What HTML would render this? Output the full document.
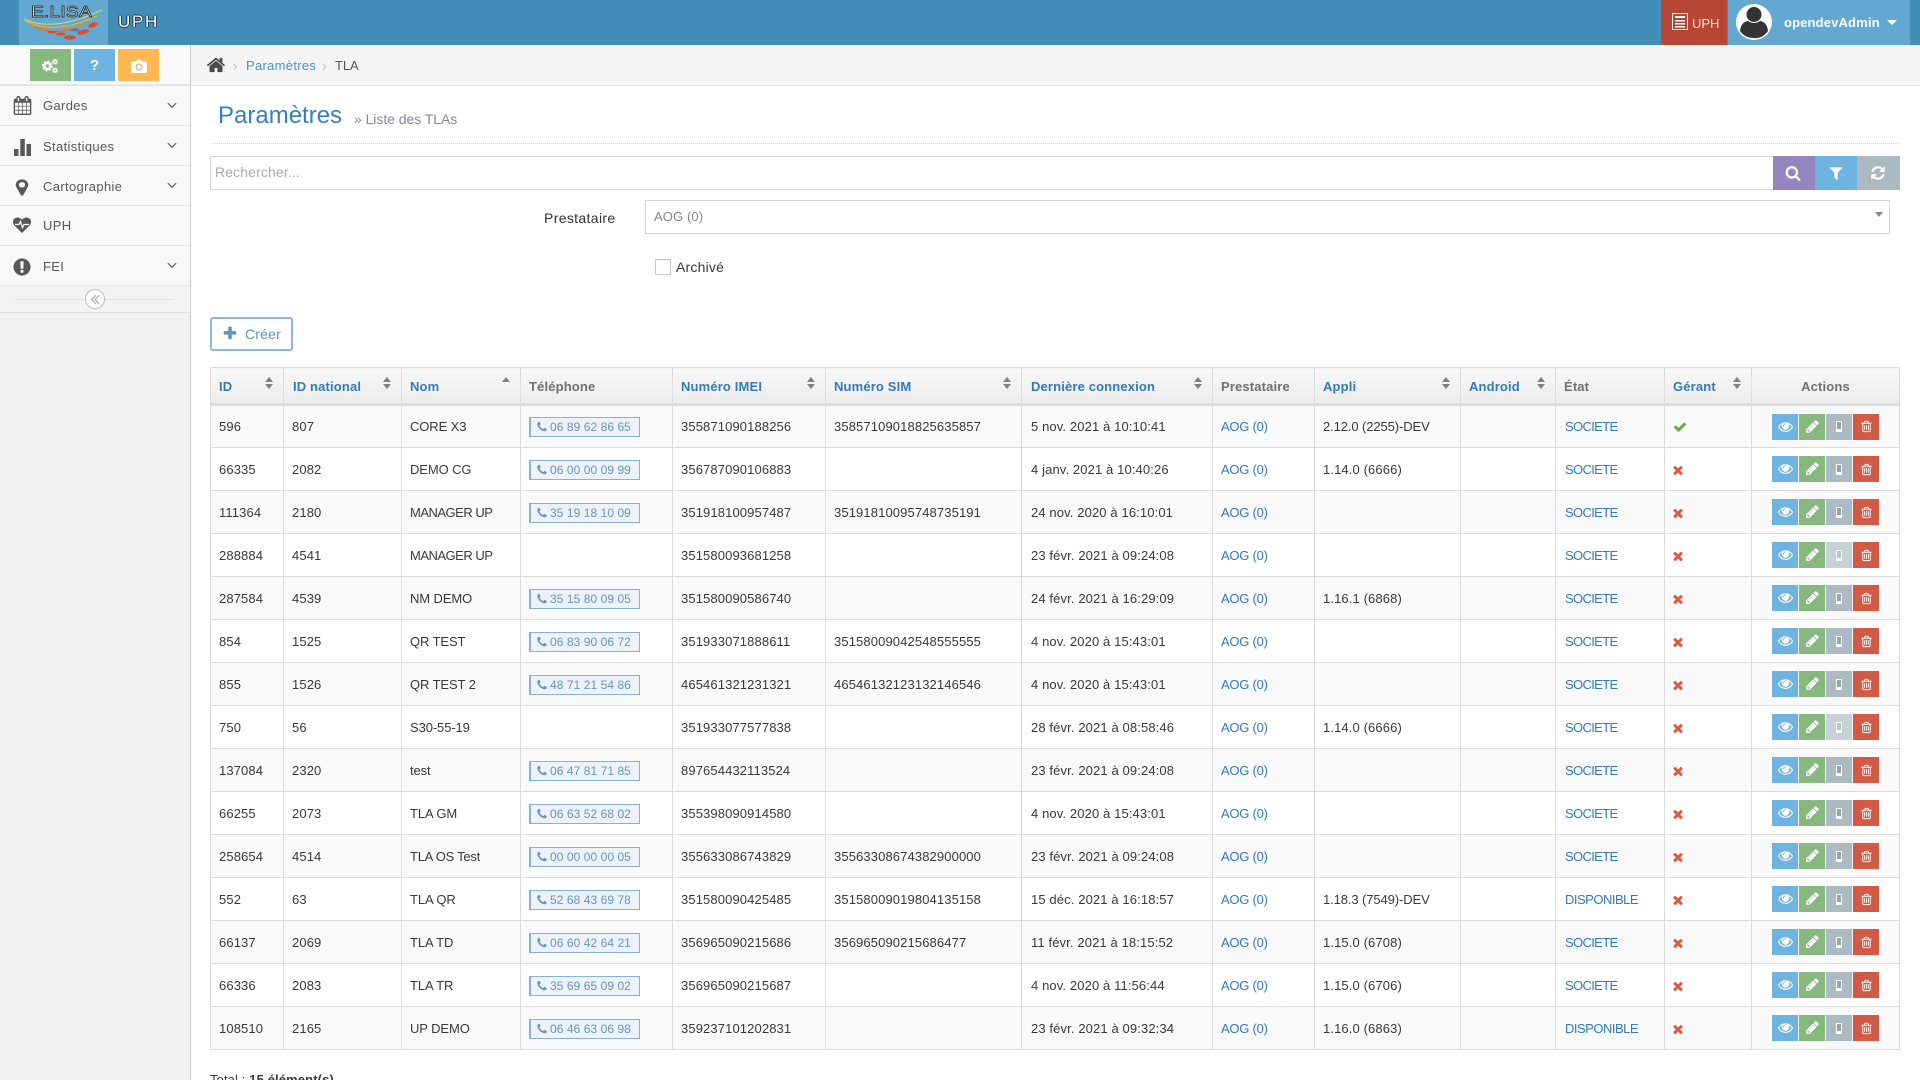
<!DOCTYPE html>
<html lang="fr"><head><meta charset="utf-8"><title>Paramètres - TLA</title>
<style>
*{box-sizing:border-box}
html,body{margin:0;padding:0;width:1920px;height:1080px;overflow:hidden;background:#fff;font:13px/1.2 "Liberation Sans",sans-serif;color:#393939;letter-spacing:.12px}
body{position:relative}
.a{position:absolute}
svg{display:block;fill:currentColor}
a{color:#337ab7;text-decoration:none}
.mi{position:absolute;left:0;width:190px;height:40px;background:#f8f8f8;border-bottom:1px solid #e5e5e5;color:#585858}
.mi span{position:absolute;left:43px;top:0;line-height:41px;font-size:13px;letter-spacing:.35px}
.mi svg{position:absolute}
.mi .ch{left:164px;top:11px;width:16px;height:16px;color:#666}
table{position:absolute;left:210px;top:367px;width:1689px;border-collapse:collapse;table-layout:fixed}
th,td{border:1px solid #ddd;padding:0 0 0 8px;text-align:left;white-space:nowrap;position:relative}
th{height:37px;font-weight:bold;color:#707070;background:linear-gradient(#f8f8f8,#ececec);border-bottom:3px solid #ddd;padding-top:2px;letter-spacing:.15px}
th.s{color:#337ab7}
th.s:before,th.s:after{content:"";position:absolute;right:10px;width:0;height:0;border-left:4px solid transparent;border-right:4px solid transparent}
th.s:before{top:9px;border-bottom:5px solid #808080}
th.s:after{top:16px;border-top:5px solid #808080}
th.u:after{display:none}
th:nth-child(2),th:nth-child(7),td:nth-child(7){padding-left:9px}
td{height:43px;padding-top:1px}
tr:nth-child(odd) td{background:#f9f9f9}
td:nth-child(3){letter-spacing:-.1px}
td:nth-child(8) a{letter-spacing:-.25px}
td:nth-child(11){padding-left:9px}
td:nth-child(11) a{letter-spacing:-.65px}
.t{display:block;width:111px;height:20px;border:1px solid #8cb0d0;border-left-width:2px;background:#ebf2f8;color:#6b95ba;font-size:12px;line-height:18px;padding-left:19px;position:relative;letter-spacing:.06px}
.t svg{position:absolute;left:5px;top:3px;width:12px;height:12px}
.k{color:#69aa46;width:14px;height:14px}
.x{color:#dd5a43;width:14px;height:14px;margin-left:-2px}
td.ac{padding:0 0 0 20px}
.bt{display:flex;gap:1px}
.bt i{display:flex;align-items:center;justify-content:center;width:26px;height:26px;color:#fff}
.bt i svg{width:15px;height:15px;margin-top:-1px}
.e{background:#6fb3e0}.p{background:#87b87f}.m{background:#abbac3}.d{background:#d15b47}.o{opacity:.65}
.bt .d svg{width:13px;height:13px;margin-top:0}
.mo{display:block;width:6px;height:11px;background:#9aa3a8;border:solid #fff;border-width:1px 1px 3px}
</style></head><body>
<svg width="0" height="0" style="position:absolute"><defs>
<symbol id="i-eye" viewBox="0 0 1792 1792"><path d="M1664 960q-152-236-381-353 61 104 61 225 0 185-131.500 316.500t-316.500 131.500-316.500-131.500-131.500-316.500q0-121 61-225-229 117-381 353 133 205 333.500 326.500t434.500 121.500 434.500-121.500 333.500-326.500zm-720-384q0-20-14-34t-34-14q-125 0-214.500 89.500t-89.500 214.500q0 20 14 34t34 14 34-14 14-34q0-86 61-147t147-61q20 0 34-14t14-34zm848 384q0 34-20 69-140 230-376.500 368.500t-499.500 138.500-499.500-139-376.500-368q-20-35-20-69t20-69q140-229 376.500-368t499.500-139 499.500 139 376.500 368q20 35 20 69z"/></symbol>
<symbol id="i-pen" viewBox="0 0 1792 1792"><path d="M491 1536l91-91-235-235-91 91v107h128v128h107zm523-928q0-22-22-22-10 0-17 7l-542 542q-7 7-7 17 0 22 22 22 10 0 17-7l542-542q7-7 7-17zm-54-192l416 416-832 832h-416v-416zm683 96q0 53-37 90l-166 166-416-416 166-165q36-38 90-38 53 0 91 38l235 234q37 39 37 91z"/></symbol>
<symbol id="i-tr" viewBox="0 0 1792 1792"><path d="M704 736v576q0 14-9 23t-23 9h-64q-14 0-23-9t-9-23v-576q0-14 9-23t23-9h64q14 0 23 9t9 23zm256 0v576q0 14-9 23t-23 9h-64q-14 0-23-9t-9-23v-576q0-14 9-23t23-9h64q14 0 23 9t9 23zm256 0v576q0 14-9 23t-23 9h-64q-14 0-23-9t-9-23v-576q0-14 9-23t23-9h64q14 0 23 9t9 23zm128 724v-948h-896v948q0 22 7 40.500t14.500 27 10.500 8.500h832q3 0 10.500-8.500t14.500-27 7-40.500zm-672-1076h448l-48-117q-7-9-17-11h-317q-10 2-17 11zm928 32v64q0 14-9 23t-23 9h-96v948q0 83-47 143.500t-113 60.500h-832q-66 0-113-58.500t-47-141.500v-952h-96q-14 0-23-9t-9-23v-64q0-14 9-23t23-9h309l70-167q15-37 54-63t79-26h320q40 0 79 26t54 63l70 167h309q14 0 23 9t9 23z"/></symbol>
<symbol id="i-ph" viewBox="0 0 1792 1792"><path d="M1600 1240q0 27-10 70.500t-21 68.500q-21 50-122 106-94 51-186 51-27 0-53-3.500t-57.500-12.500-47-14.500-55.500-20.500-49-18q-98-35-175-83-127-79-264-216t-216-264q-48-77-83-175-3-9-18-49t-20.500-55.500-14.500-47-12.500-57.500-3.500-53q0-92 51-186 56-101 106-122 25-11 68.500-21t70.500-10q14 0 21 3 18 6 53 76 11 19 30 54t35 63.500 31 53.500q3 4 17.500 25t21.500 35.500 7 28.500q0 20-28.500 50t-62 55-62 53-28.500 46q0 9 5 22.500t8.500 20.500 14 24 11.500 19q76 137 174 235t235 174q2 1 19 11.500t24 14 20.500 8.500 22.500 5q18 0 46-28.500t53-62 55-62 50-28.500q14 0 28.500 7t35.500 21.500 25 17.500q25 15 53.500 31t63.500 35 54 30q70 35 76 53 3 7 3 21z"/></symbol>
<symbol id="i-k" viewBox="0 0 1792 1792"><path d="M1671 566q0 40-28 68l-724 724-136 136q-28 28-68 28t-68-28l-136-136-362-362q-28-28-28-68t28-68l136-136q28-28 68-28t68 28l294 295 656-657q28-28 68-28t68 28l136 136q28 28 28 68z"/></symbol>
<symbol id="i-x" viewBox="0 0 1792 1792"><path d="M1490 1322q0 40-28 68l-136 136q-28 28-68 28t-68-28l-294-294-294 294q-28 28-68 28t-68-28l-136-136q-28-28-28-68t28-68l294-294-294-294q-28-28-28-68t28-68l136-136q28-28 68-28t68 28l294 294 294-294q28-28 68-28t68 28l136 136q28 28 28 68t-28 68l-294 294 294 294q28 28 28 68z"/></symbol>
<symbol id="i-dn" viewBox="0 0 1792 1792"><path d="M1395 736q0 13-10 23l-466 466q-10 10-23 10t-23-10l-466-466q-10-10-10-23t10-23l50-50q10-10 23-10t23 10l393 393 393-393q10-10 23-10t23 10l50 50q10 10 10 23z"/></symbol>
<symbol id="i-r" viewBox="0 0 1792 1792"><path d="M1171 960q0 13-10 23l-466 466q-10 10-23 10t-23-10l-50-50q-10-10-10-23t10-23l393-393-393-393q-10-10-10-23t10-23l50-50q10-10 23-10t23 10l466 466q10 10 10 23z"/></symbol>
</defs></svg>

<!-- Navbar -->
<div class="a" style="left:0;top:0;width:1920px;height:45px;background:#438eb9"></div>
<div class="a" style="left:19px;top:0;width:89px;height:45px;background:#62a8d1"></div>
<svg class="a" style="left:19px;top:0" width="89" height="45" viewBox="0 0 89 45">
<g fill="none" stroke-linecap="round">
<path d="M5 19Q34 33 83 10" stroke="#d7d75a" stroke-width="1"/>
<path d="M7 21Q34 36 78 16" stroke="#dcb844" stroke-width="1.200"/>
<path d="M11 24Q36 37 72 21" stroke="#dd8a36" stroke-width="1.500"/>
<path d="M16 27Q38 36 60 27" stroke="#d9722e" stroke-width="1.200"/>
</g>
<g fill="#e2492a"><ellipse cx="51" cy="37.500" rx="6" ry="2.200"/><ellipse cx="64" cy="32" rx="6" ry="2.200" transform="rotate(-14 64 32)"/><ellipse cx="74" cy="25" rx="5" ry="2.100" transform="rotate(-22 74 25)"/><ellipse cx="42" cy="34" rx="5" ry="1.500"/><ellipse cx="33" cy="32" rx="5" ry="1.200"/></g>
<ellipse cx="56" cy="30" rx="4.500" ry="1.500" fill="#3b7fc9"/>
<text x="12" y="17" font-family="Liberation Sans" font-size="16" textLength="61" lengthAdjust="spacingAndGlyphs" fill="#d8e6ee" stroke="#1f1f1f" stroke-width=".7">E.LISA</text>
</svg>
<div class="a" style="left:118px;top:13px;font-size:17px;line-height:18px;letter-spacing:1.7px;color:#fff;text-shadow:1px 0 0 #1d3a4d,-1px 0 0 #1d3a4d,0 1px 0 #1d3a4d,0 -1px 0 #1d3a4d">UPH</div>

<div class="a" style="left:1661px;top:0;width:66px;height:45px;background:#b74635"></div>
<svg class="a" style="left:1672px;top:13px" width="16" height="17" viewBox="0 0 16 17"><rect x=".5" y=".5" width="15" height="16" fill="none" stroke="#fff"/><path d="M3 3h10v2H3zM3 7h10v1.500H3zM3 10h10v1.500H3zM3 13h10v1.500H3z" fill="#fff"/></svg>
<div class="a" style="left:1692px;top:15px;color:#f4e2df;font-size:13px;line-height:17px;letter-spacing:0">UPH</div>
<div class="a" style="left:1728px;top:0;width:182px;height:45px;background:#62a8d1"></div>
<svg class="a" style="left:1736px;top:4px" width="36" height="36" viewBox="0 0 36 36"><circle cx="18" cy="18" r="18" fill="#fff"/><circle cx="18" cy="10.500" r="7.500" fill="#333"/><path d="M4 27Q5 18 12 17Q18 21 24 17Q31 18 32 27Q26 35 18 34Q9 34 4 27Z" fill="#333"/></svg>
<div class="a" style="left:1784px;top:15px;color:#fff;font-weight:bold;font-size:13px;line-height:16px;letter-spacing:.15px">opendevAdmin</div>
<div class="a" style="left:1887px;top:20px;width:0;height:0;border:5px solid transparent;border-top:5px solid #fff;border-left-width:5px"></div>

<!-- Sidebar -->
<div class="a" style="left:0;top:45px;width:190px;height:1035px;background:#f2f2f2"></div>
<div class="a" style="left:190px;top:45px;width:1px;height:1035px;background:#ccc"></div>
<div class="a" style="left:0;top:45px;width:190px;height:41px;background:#fafafa;border-bottom:2px solid #e5e5e5"></div>
<div class="a" style="left:30px;top:49px;width:41px;height:32px;background:#87b87f"></div>
<div class="a" style="left:74px;top:49px;width:41px;height:32px;background:#6fb3e0;color:#fff;font-weight:bold;font-size:15px;line-height:33px;text-align:center">?</div>
<div class="a" style="left:118px;top:49px;width:41px;height:32px;background:#ffb752"></div>
<svg class="a" style="left:42px;top:59px;fill:none" width="16" height="14" viewBox="0 0 16 14" stroke="#fff"><circle cx="5.300" cy="7" r="3" stroke-width="2.400"/><circle cx="5.300" cy="7" r="4.700" stroke-width="1.600" stroke-dasharray="1.900 1.800"/><circle cx="13" cy="2.700" r="1.600" stroke-width="1.400"/><circle cx="13" cy="11.300" r="1.600" stroke-width="1.400"/><circle cx="13" cy="2.700" r="2.500" stroke-width=".8" stroke-dasharray="1.100 1.100"/><circle cx="13" cy="11.300" r="2.500" stroke-width=".8" stroke-dasharray="1.100 1.100"/></svg>
<svg class="a" style="left:131px;top:59px" width="16" height="14" viewBox="0 0 16 14"><path d="M1.500 2.500H5L6 .5h4l1 2h3.500q1.500 0 1.500 1.500v8.500q0 1.500-1.500 1.500h-13Q0 14 0 12.500V4q0-1.500 1.500-1.500z" fill="#fff"/><circle cx="8" cy="8" r="3" fill="none" stroke="#e8a24f" stroke-width="1"/></svg>

<div class="mi" style="top:86px"><svg style="left:13px;top:10px;width:19px;height:19px" viewBox="0 0 1792 1792"><path d="M192 1664h288v-288h-288v288zm352 0h320v-288h-320v288zm-352-352h288v-320h-288v320zm352 0h320v-320h-320v320zm-352-384h288v-288h-288v288zm736 736h320v-288h-320v288zm-384-736h320v-288h-320v288zm768 736h288v-288h-288v288zm-384-352h320v-320h-320v320zm-352-864v-288q0-13-9.500-22.500t-22.500-9.500h-64q-13 0-22.500 9.500t-9.500 22.500v288q0 13 9.500 22.500t22.500 9.500h64q13 0 22.500-9.500t9.500-22.500zm736 864h288v-320h-288v320zm-384-384h320v-288h-320v288zm384 0h288v-288h-288v288zm32-480v-288q0-13-9.500-22.500t-22.500-9.500h-64q-13 0-22.500 9.500t-9.500 22.500v288q0 13 9.500 22.500t22.500 9.500h64q13 0 22.500-9.500t9.500-22.500zm384-64v1280q0 52-38 90t-90 38h-1408q-52 0-90-38t-38-90v-1280q0-52 38-90t90-38h128v-96q0-66 47-113t113-47h64q66 0 113 47t47 113v96h384v-96q0-66 47-113t113-47h64q66 0 113 47t47 113v96h128q52 0 90 38t38 90z"/></svg><span style="top:-1px">Gardes</span><svg class="ch"><use href="#i-dn"/></svg></div>
<div class="mi" style="top:126px"><svg style="left:14px;top:13px;width:17px;height:17px" viewBox="0 0 17 17"><rect x="0" y="10" width="4.500" height="7"/><rect x="6.300" y="0" width="4.500" height="17"/><rect x="12.500" y="5" width="4.500" height="12"/></svg><span>Statistiques</span><svg class="ch"><use href="#i-dn"/></svg></div>
<div class="mi" style="top:166px"><svg style="left:11px;top:12px;width:22px;height:19px" viewBox="0 0 1792 1792" preserveAspectRatio="none"><path d="M1152 640q0-106-75-181t-181-75-181 75-75 181 75 181 181 75 181-75 75-181zm256 0q0 109-33 179l-364 774q-16 33-47.500 52t-67.500 19-67.500-19-46.500-52l-365-774q-33-70-33-179 0-212 150-362t362-150 362 150 150 362z"/></svg><span>Cartographie</span><svg class="ch"><use href="#i-dn"/></svg></div>
<div class="mi" style="top:206px"><svg style="left:13px;top:11px;width:18px;height:16px" viewBox="0 0 18 16"><path d="M9 16L1.200 8.200Q-1.500 4.500 1.500 1.500 5-1 9 2.500 13-1 16.500 1.500 19.500 4.500 16.800 8.200Z"/><path d="M2 7.500h4l1.500-3 2 6 1.500-3h5" fill="none" stroke="#f8f8f8" stroke-width="1.300"/></svg><span style="top:-1px">UPH</span></div>
<div class="mi" style="top:246px"><svg style="left:12px;top:11px;width:20px;height:20px" viewBox="0 128 1792 1536"><path d="M896 128q209 0 385.500 103t279.500 279.500 103 385.500-103 385.500-279.500 279.500-385.500 103-385.500-103-279.500-279.500-103-385.500 103-385.500 279.500-279.500 385.500-103zm128 1247v-190q0-14-9-23.500t-22-9.500h-192q-13 0-23 10t-10 23v190q0 13 10 23t23 10h192q13 0 22-9.500t9-23.500zm-2-344l18-621q0-12-10-18-10-8-24-8h-220q-14 0-24 8-10 6-10 18l17 621q0 10 10 17.500t24 7.500h185q14 0 23.500-7.500t10.500-17.500z"/></svg><span>FEI</span><svg class="ch"><use href="#i-dn"/></svg></div>
<div class="a" style="left:0;top:286px;width:190px;height:27px;background:#f3f3f3;border-bottom:1px solid #e0e0e0"></div>
<div class="a" style="left:15px;top:299px;width:159px;height:1px;background:#e0e0e0"></div>
<div class="a" style="left:85px;top:289px;width:20px;height:20px;border-radius:50%;background:#fff;border:1px solid #bbb"></div>
<svg class="a" style="left:90px;top:294px;color:#aaa" width="10" height="10" viewBox="350 350 1100 1100"><path d="M1011 1376q0 13-10 23l-50 50q-10 10-23 10t-23-10l-466-466q-10-10-10-23t10-23l466-466q10-10 23-10t23 10l50 50q10 10 10 23t-10 23l-393 393 393 393q10 10 10 23zm384 0q0 13-10 23l-50 50q-10 10-23 10t-23-10l-466-466q-10-10-10-23t10-23l466-466q10-10 23-10t23 10l50 50q10 10 10 23t-10 23l-393 393 393 393q10 10 10 23z"/></svg>

<!-- Breadcrumbs -->
<div class="a" style="left:191px;top:45px;width:1729px;height:41px;background:#f5f5f5;border-bottom:1px solid #e5e5e5"></div>
<svg class="a" style="left:206px;top:55px;color:#4c4c4c" width="20" height="20" viewBox="0 0 1792 1792"><path d="M1472 992v480q0 26-19 45t-45 19h-384v-384h-256v384h-384q-26 0-45-19t-19-45v-480q0-1 .5-3t.5-3l575-474 575 474q1 2 1 6zm223-69l-62 74q-8 9-21 11h-3q-13 0-21-7l-692-577-692 577q-12 8-24 7-13-2-21-11l-62-74q-8-10-7-23.500t11-21.500l719-597q32-26 76-26t76 26l244 204v-195q0-14 9-23t23-9h192q14 0 23 9t9 23v408l219 182q10 8 11 21.500t-7 23.500z"/></svg>
<svg class="a" style="left:230px;top:60px;color:#b2b6bf" width="11" height="13"><use href="#i-r"/></svg>
<a class="a" style="left:246px;top:58px;line-height:16px;color:#4c8fbd;letter-spacing:.3px">Paramètres</a>
<svg class="a" style="left:319px;top:60px;color:#b2b6bf" width="11" height="13"><use href="#i-r"/></svg>
<div class="a" style="left:335px;top:58px;line-height:16px;color:#555;letter-spacing:-.1px">TLA</div>

<!-- Page header -->
<div class="a" style="left:218px;top:101px;font-size:24px;line-height:29px;color:#3481ba;letter-spacing:0">Paramètres</div>
<div class="a" style="left:354px;top:110px;font-size:14px;line-height:18px;color:#8089a0;letter-spacing:-.05px">» Liste des TLAs</div>
<div class="a" style="left:211px;top:143px;width:1689px;border-top:1px dotted #d5d5d5"></div>

<!-- Search -->
<div class="a" style="left:210px;top:156px;width:1564px;height:34px;border:1px solid #d5d5d5;border-width:1px 1px;background:#fff;color:#aaa;font-size:14px;line-height:31px;padding-left:4px">Rechercher...</div>
<div class="a" style="left:1773px;top:156px;width:42px;height:34px;background:#9585bf;color:#fff"><svg style="margin:9px 0 0 12px" width="16" height="16" viewBox="0 0 1792 1792"><path d="M1216 832q0-185-131.500-316.500t-316.500-131.500-316.500 131.500-131.500 316.500 131.500 316.500 316.500 131.500 316.500-131.500 131.500-316.500zm512 832q0 52-38 90t-90 38q-54 0-90-38l-343-342q-179 124-399 124-143 0-273.500-55.500t-225-150-150-225-55.500-273.500 55.500-273.500 150-225 225-150 273.500-55.500 273.500 55.500 225 150 150 225 55.500 273.500q0 220-124 399l343 343q37 37 37 90z"/></svg></div>
<div class="a" style="left:1815px;top:156px;width:42px;height:34px;background:#6fb3e0;color:#fff"><svg style="margin:9px 0 0 12.500px" width="16" height="16" viewBox="0 0 1792 1792"><path d="M1595 295q17 41-14 70l-493 493v742q0 42-39 59-13 5-25 5-27 0-45-19l-256-256q-19-19-19-45v-486l-493-493q-31-29-14-70 17-39 59-39h1280q42 0 59 39z"/></svg></div>
<div class="a" style="left:1857px;top:156px;width:43px;height:34px;background:#abbac3;color:#fff"><svg style="margin:9px 0 0 12.500px" width="16" height="16" viewBox="0 0 1792 1792"><path d="M1639 1056q0 5-1 7-64 268-268 434.500t-478 166.500q-146 0-282.500-55t-243.500-157l-129 129q-19 19-45 19t-45-19-19-45v-448q0-26 19-45t45-19h448q26 0 45 19t19 45-19 45l-137 137q71 66 161 102t187 36q134 0 250-65t186-179q11-17 53-117 8-23 30-23h192q13 0 22.500 9.500t9.500 22.500zm25-800v448q0 26-19 45t-45 19h-448q-26 0-45-19t-19-45 19-45l138-138q-148-137-349-137-134 0-250 65t-186 179q-11 17-53 117-8 23-30 23h-199q-13 0-22.500-9.500t-9.500-22.500v-7q65-268 270-434.500t480-166.500q146 0 284 55.500t245 156.500l130-129q19-19 45-19t45 19 19 45z"/></svg></div>

<!-- Filters -->
<div class="a" style="left:544px;top:209px;font-size:14px;line-height:18px;color:#333;letter-spacing:.35px">Prestataire</div>
<div class="a" style="left:645px;top:200px;width:1245px;height:34px;border:1px solid #d5d5d5;background:#fff;color:#858585;font-size:13px;line-height:31px;padding-left:8px">AOG (0)</div>
<div class="a" style="left:1875px;top:212px;width:0;height:0;border:4.500px solid transparent;border-top:5px solid #888"></div>
<div class="a" style="left:655px;top:259px;width:16px;height:16px;border:1px solid #c8c8c8;background:#fff;box-shadow:inset 0 1px 1px rgba(0,0,0,.06)"></div>
<div class="a" style="left:676px;top:258px;font-size:14px;line-height:18px;color:#393939;letter-spacing:.2px">Archivé</div>

<!-- Create -->
<div class="a" style="left:210px;top:317px;width:83px;height:34px;border:2px solid #8fb9d3;border-radius:3px;background:#fff"></div>
<svg class="a" style="left:222px;top:326px;color:#5b94bd" width="16" height="16" viewBox="0 0 1792 1792"><path d="M1600 736v192q0 40-28 68t-68 28h-416v416q0 40-28 68t-68 28h-192q-40 0-68-28t-28-68v-416h-416q-40 0-68-28t-28-68v-192q0-40 28-68t68-28h416v-416q0-40 28-68t68-28h192q40 0 68 28t28 68v416h416q40 0 68 28t28 68z" transform="translate(0 -64)"/></svg>
<div class="a" style="left:245px;top:325px;font-size:14px;line-height:18px;color:#5b94bd;letter-spacing:.2px">Créer</div>

<!-- Table -->
<table><colgroup><col style="width:73px"><col style="width:118px"><col style="width:119px"><col style="width:152px"><col style="width:153px"><col style="width:196px"><col style="width:191px"><col style="width:102px"><col style="width:146px"><col style="width:95px"><col style="width:109px"><col style="width:87px"><col style="width:148px"></colgroup>
<thead><tr><th class="s">ID</th><th class="s">ID national</th><th class="s u">Nom</th><th>Téléphone</th><th class="s">Numéro IMEI</th><th class="s">Numéro SIM</th><th class="s">Dernière connexion</th><th>Prestataire</th><th class="s">Appli</th><th class="s">Android</th><th>État</th><th class="s">Gérant</th><th style="text-align:center;padding-left:0">Actions</th></tr></thead>
<tbody>
<tr><td>596</td><td>807</td><td>CORE X3</td><td><span class="t"><svg><use href="#i-ph"/></svg>06 89 62 86 65</span></td><td>355871090188256</td><td>35857109018825635857</td><td>5 nov. 2021 à 10:10:41</td><td><a>AOG (0)</a></td><td style="letter-spacing:-.1px">2.12.0 (2255)-DEV</td><td></td><td><a>SOCIETE</a></td><td><svg class="k"><use href="#i-k"/></svg></td><td class="ac"><div class="bt"><i class="e"><svg><use href="#i-eye"/></svg></i><i class="p"><svg><use href="#i-pen"/></svg></i><i class="m"><b class="mo"></b></i><i class="d"><svg><use href="#i-tr"/></svg></i></div></td></tr>
<tr><td>66335</td><td>2082</td><td>DEMO CG</td><td><span class="t"><svg><use href="#i-ph"/></svg>06 00 00 09 99</span></td><td>356787090106883</td><td></td><td>4 janv. 2021 à 10:40:26</td><td><a>AOG (0)</a></td><td>1.14.0 (6666)</td><td></td><td><a>SOCIETE</a></td><td><svg class="x"><use href="#i-x"/></svg></td><td class="ac"><div class="bt"><i class="e"><svg><use href="#i-eye"/></svg></i><i class="p"><svg><use href="#i-pen"/></svg></i><i class="m"><b class="mo"></b></i><i class="d"><svg><use href="#i-tr"/></svg></i></div></td></tr>
<tr><td>111364</td><td>2180</td><td style="letter-spacing:-.5px">MANAGER UP</td><td><span class="t"><svg><use href="#i-ph"/></svg>35 19 18 10 09</span></td><td>351918100957487</td><td>35191810095748735191</td><td>24 nov. 2020 à 16:10:01</td><td><a>AOG (0)</a></td><td></td><td></td><td><a>SOCIETE</a></td><td><svg class="x"><use href="#i-x"/></svg></td><td class="ac"><div class="bt"><i class="e"><svg><use href="#i-eye"/></svg></i><i class="p"><svg><use href="#i-pen"/></svg></i><i class="m"><b class="mo"></b></i><i class="d"><svg><use href="#i-tr"/></svg></i></div></td></tr>
<tr><td>288884</td><td>4541</td><td style="letter-spacing:-.5px">MANAGER UP</td><td></td><td>351580093681258</td><td></td><td>23 févr. 2021 à 09:24:08</td><td><a>AOG (0)</a></td><td></td><td></td><td><a>SOCIETE</a></td><td><svg class="x"><use href="#i-x"/></svg></td><td class="ac"><div class="bt"><i class="e"><svg><use href="#i-eye"/></svg></i><i class="p"><svg><use href="#i-pen"/></svg></i><i class="m o"><b class="mo"></b></i><i class="d"><svg><use href="#i-tr"/></svg></i></div></td></tr>
<tr><td>287584</td><td>4539</td><td>NM DEMO</td><td><span class="t"><svg><use href="#i-ph"/></svg>35 15 80 09 05</span></td><td>351580090586740</td><td></td><td>24 févr. 2021 à 16:29:09</td><td><a>AOG (0)</a></td><td>1.16.1 (6868)</td><td></td><td><a>SOCIETE</a></td><td><svg class="x"><use href="#i-x"/></svg></td><td class="ac"><div class="bt"><i class="e"><svg><use href="#i-eye"/></svg></i><i class="p"><svg><use href="#i-pen"/></svg></i><i class="m"><b class="mo"></b></i><i class="d"><svg><use href="#i-tr"/></svg></i></div></td></tr>
<tr><td>854</td><td>1525</td><td>QR TEST</td><td><span class="t"><svg><use href="#i-ph"/></svg>06 83 90 06 72</span></td><td>351933071888611</td><td>35158009042548555555</td><td>4 nov. 2020 à 15:43:01</td><td><a>AOG (0)</a></td><td></td><td></td><td><a>SOCIETE</a></td><td><svg class="x"><use href="#i-x"/></svg></td><td class="ac"><div class="bt"><i class="e"><svg><use href="#i-eye"/></svg></i><i class="p"><svg><use href="#i-pen"/></svg></i><i class="m"><b class="mo"></b></i><i class="d"><svg><use href="#i-tr"/></svg></i></div></td></tr>
<tr><td>855</td><td>1526</td><td>QR TEST 2</td><td><span class="t"><svg><use href="#i-ph"/></svg>48 71 21 54 86</span></td><td>465461321231321</td><td>46546132123132146546</td><td>4 nov. 2020 à 15:43:01</td><td><a>AOG (0)</a></td><td></td><td></td><td><a>SOCIETE</a></td><td><svg class="x"><use href="#i-x"/></svg></td><td class="ac"><div class="bt"><i class="e"><svg><use href="#i-eye"/></svg></i><i class="p"><svg><use href="#i-pen"/></svg></i><i class="m"><b class="mo"></b></i><i class="d"><svg><use href="#i-tr"/></svg></i></div></td></tr>
<tr><td>750</td><td>56</td><td>S30-55-19</td><td></td><td>351933077577838</td><td></td><td>28 févr. 2021 à 08:58:46</td><td><a>AOG (0)</a></td><td>1.14.0 (6666)</td><td></td><td><a>SOCIETE</a></td><td><svg class="x"><use href="#i-x"/></svg></td><td class="ac"><div class="bt"><i class="e"><svg><use href="#i-eye"/></svg></i><i class="p"><svg><use href="#i-pen"/></svg></i><i class="m o"><b class="mo"></b></i><i class="d"><svg><use href="#i-tr"/></svg></i></div></td></tr>
<tr><td>137084</td><td>2320</td><td>test</td><td><span class="t"><svg><use href="#i-ph"/></svg>06 47 81 71 85</span></td><td>897654432113524</td><td></td><td>23 févr. 2021 à 09:24:08</td><td><a>AOG (0)</a></td><td></td><td></td><td><a>SOCIETE</a></td><td><svg class="x"><use href="#i-x"/></svg></td><td class="ac"><div class="bt"><i class="e"><svg><use href="#i-eye"/></svg></i><i class="p"><svg><use href="#i-pen"/></svg></i><i class="m"><b class="mo"></b></i><i class="d"><svg><use href="#i-tr"/></svg></i></div></td></tr>
<tr><td>66255</td><td>2073</td><td>TLA GM</td><td><span class="t"><svg><use href="#i-ph"/></svg>06 63 52 68 02</span></td><td>355398090914580</td><td></td><td>4 nov. 2020 à 15:43:01</td><td><a>AOG (0)</a></td><td></td><td></td><td><a>SOCIETE</a></td><td><svg class="x"><use href="#i-x"/></svg></td><td class="ac"><div class="bt"><i class="e"><svg><use href="#i-eye"/></svg></i><i class="p"><svg><use href="#i-pen"/></svg></i><i class="m"><b class="mo"></b></i><i class="d"><svg><use href="#i-tr"/></svg></i></div></td></tr>
<tr><td>258654</td><td>4514</td><td style="letter-spacing:-.25px">TLA OS Test</td><td><span class="t"><svg><use href="#i-ph"/></svg>00 00 00 00 05</span></td><td>355633086743829</td><td>35563308674382900000</td><td>23 févr. 2021 à 09:24:08</td><td><a>AOG (0)</a></td><td></td><td></td><td><a>SOCIETE</a></td><td><svg class="x"><use href="#i-x"/></svg></td><td class="ac"><div class="bt"><i class="e"><svg><use href="#i-eye"/></svg></i><i class="p"><svg><use href="#i-pen"/></svg></i><i class="m"><b class="mo"></b></i><i class="d"><svg><use href="#i-tr"/></svg></i></div></td></tr>
<tr><td>552</td><td>63</td><td>TLA QR</td><td><span class="t"><svg><use href="#i-ph"/></svg>52 68 43 69 78</span></td><td>351580090425485</td><td>35158009019804135158</td><td>15 déc. 2021 à 16:18:57</td><td><a>AOG (0)</a></td><td style="letter-spacing:-.1px">1.18.3 (7549)-DEV</td><td></td><td><a style="letter-spacing:-.5px">DISPONIBLE</a></td><td><svg class="x"><use href="#i-x"/></svg></td><td class="ac"><div class="bt"><i class="e"><svg><use href="#i-eye"/></svg></i><i class="p"><svg><use href="#i-pen"/></svg></i><i class="m"><b class="mo"></b></i><i class="d"><svg><use href="#i-tr"/></svg></i></div></td></tr>
<tr><td>66137</td><td>2069</td><td>TLA TD</td><td><span class="t"><svg><use href="#i-ph"/></svg>06 60 42 64 21</span></td><td>356965090215686</td><td>356965090215686477</td><td>11 févr. 2021 à 18:15:52</td><td><a>AOG (0)</a></td><td>1.15.0 (6708)</td><td></td><td><a>SOCIETE</a></td><td><svg class="x"><use href="#i-x"/></svg></td><td class="ac"><div class="bt"><i class="e"><svg><use href="#i-eye"/></svg></i><i class="p"><svg><use href="#i-pen"/></svg></i><i class="m"><b class="mo"></b></i><i class="d"><svg><use href="#i-tr"/></svg></i></div></td></tr>
<tr><td>66336</td><td>2083</td><td>TLA TR</td><td><span class="t"><svg><use href="#i-ph"/></svg>35 69 65 09 02</span></td><td>356965090215687</td><td></td><td>4 nov. 2020 à 11:56:44</td><td><a>AOG (0)</a></td><td>1.15.0 (6706)</td><td></td><td><a>SOCIETE</a></td><td><svg class="x"><use href="#i-x"/></svg></td><td class="ac"><div class="bt"><i class="e"><svg><use href="#i-eye"/></svg></i><i class="p"><svg><use href="#i-pen"/></svg></i><i class="m"><b class="mo"></b></i><i class="d"><svg><use href="#i-tr"/></svg></i></div></td></tr>
<tr><td>108510</td><td>2165</td><td>UP DEMO</td><td><span class="t"><svg><use href="#i-ph"/></svg>06 46 63 06 98</span></td><td>359237101202831</td><td></td><td>23 févr. 2021 à 09:32:34</td><td><a>AOG (0)</a></td><td>1.16.0 (6863)</td><td></td><td><a style="letter-spacing:-.5px">DISPONIBLE</a></td><td><svg class="x"><use href="#i-x"/></svg></td><td class="ac"><div class="bt"><i class="e"><svg><use href="#i-eye"/></svg></i><i class="p"><svg><use href="#i-pen"/></svg></i><i class="m"><b class="mo"></b></i><i class="d"><svg><use href="#i-tr"/></svg></i></div></td></tr>
</tbody></table>

<div class="a" style="left:210px;top:1072px;line-height:16px;color:#393939">Total : <b>15 élément(s)</b></div>
</body></html>
